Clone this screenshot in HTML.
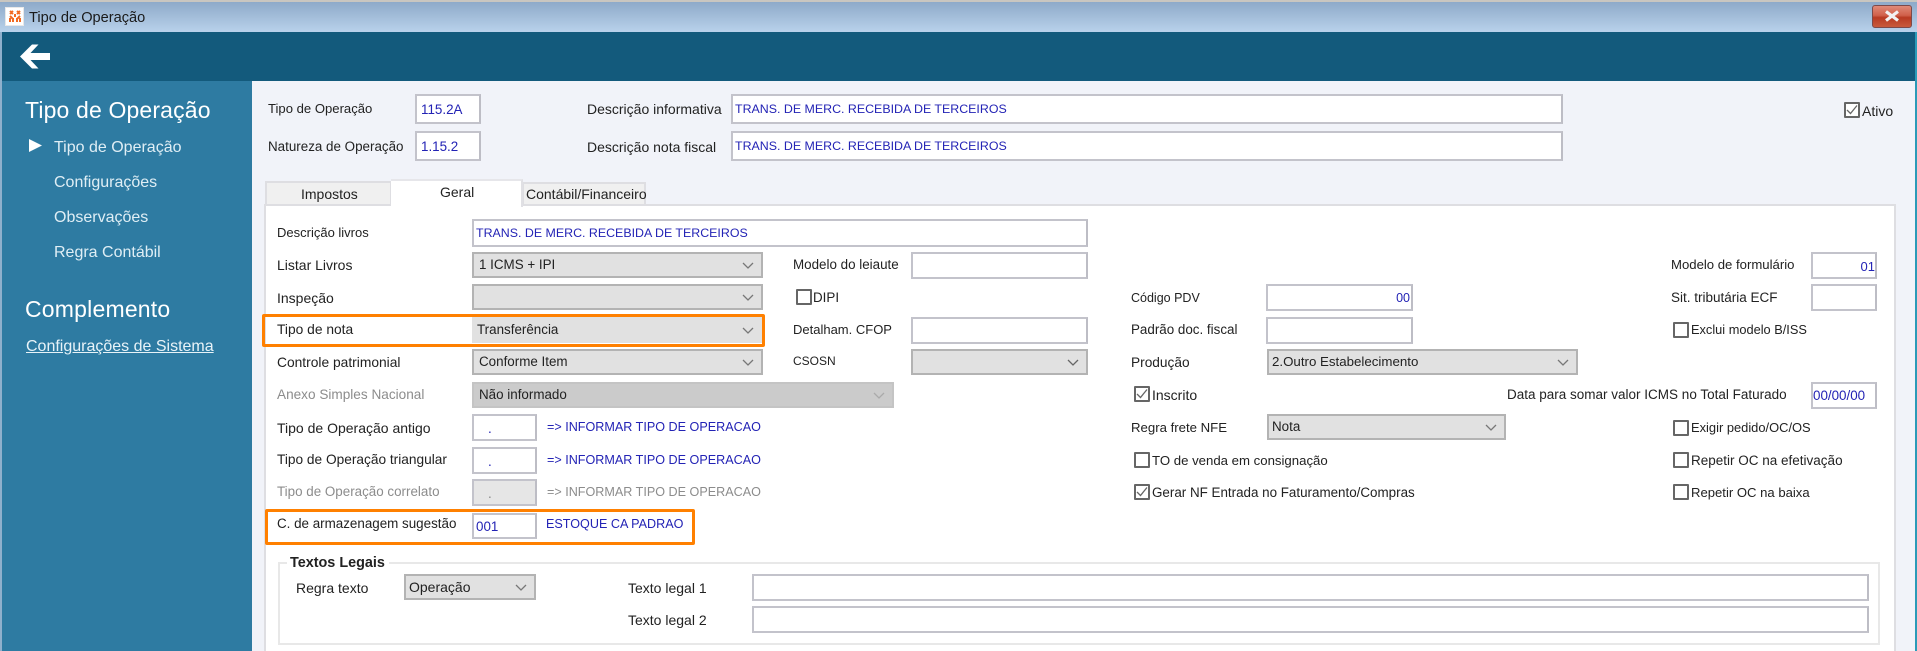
<!DOCTYPE html>
<html lang="pt"><head><meta charset="utf-8"><title>Tipo de Operação</title>
<style>
html,body{margin:0;padding:0;width:1917px;height:651px;overflow:hidden;background:#f1f3f9}
body{position:relative;font-family:"Liberation Sans",sans-serif;font-size:13.4px;color:#222;filter:blur(.3px)}
div,span{position:absolute;box-sizing:border-box}
.t{white-space:nowrap;height:20px;line-height:20px}
.b{color:#2323b5;font-size:12.6px}
.g{color:#8c8c8c}
.w{color:#dfeef5;font-size:16px}
.h{color:#fff;font-size:23px;height:30px;line-height:30px;white-space:nowrap}
.i{background:#fff;border:2px solid #c3c3cb;border-right-color:#bdbdc5;line-height:24px;padding-left:2px;white-space:nowrap;color:#2323b5}
.u{font-size:12.4px}
.s{background:#e1e1e1;border:2px solid #b3b3b3;line-height:22px;padding-left:5px;white-space:nowrap;color:#222}
.s svg{position:absolute;right:7px;top:8px}
.c{width:16px;height:16px;border:2px solid #666;background:#fff;border-radius:1px}
.c svg{position:absolute;left:0;top:0}
.o{border:3.5px solid #ff8000;border-radius:2px}
.k{font-size:14px}
</style></head><body>
<div style="left:0;top:0;width:1917px;height:2px;background:#c9c6c0"></div>
<div style="left:0;top:2px;width:1917px;height:30px;background:linear-gradient(#8eaac9,#b9d2eb)"></div>
<div style="left:5px;top:7px;width:19px;height:19px;background:#fff;border:1px solid #e8e8e8"></div>
<svg style="position:absolute;left:9px;top:10px" width="12" height="13" viewBox="0 0 12 13"><path d="M1 1l3 3M8 1l3 3M11 1L8 4M4 1L1 4M6 4l0 3M1 6l3 3M11 6L8 9M1 12V8M4 12V8M8 12V8M11 12V8" stroke="#f26a21" stroke-width="2" fill="none"/></svg>
<span class="t" style="left:29px;top:8px;font-size:14.6px;color:#1a1a1a">Tipo de Operação</span>
<div style="left:1872px;top:5px;width:40px;height:23px;border:1px solid #7c4a4a;border-radius:3px;background:linear-gradient(#e08a78 0%,#d0604a 45%,#b83a22 55%,#c85a3c 100%)"></div>
<svg style="position:absolute;left:1884px;top:10px" width="16" height="12" viewBox="0 0 16 12"><path d="M2 1.500L14 10.500M14 1.500L2 10.500" stroke="#f2f2f2" stroke-width="3.200"/></svg>

<div style="left:0;top:32px;width:1915px;height:49px;background:#135a7c"></div>
<svg style="position:absolute;left:19px;top:43px" width="32" height="27" viewBox="0 0 32 27"><path d="M1 13.500L13 1.500h6.500L11.500 10H31v7H11.500l8 8.500H13Z" fill="#fff"/></svg>

<div style="left:0;top:32px;width:2px;height:619px;background:#8fb0cc"></div>
<div style="left:2px;top:81px;width:250px;height:570px;background:#2e7ba2"></div>
<span class="h" style="left:25px;top:95px;letter-spacing:.15px">Tipo de Operação</span>
<svg style="position:absolute;left:29px;top:139px" width="14" height="13" viewBox="0 0 14 13"><path d="M0 0L13 6.500 0 13Z" fill="#fff"/></svg>
<span class="t w" style="left:54px;top:138px">Tipo de Operação</span>
<span class="t w" style="left:54px;top:173px">Configurações</span>
<span class="t w" style="left:54px;top:208px">Observações</span>
<span class="t w" style="left:54px;top:243px">Regra Contábil</span>
<span class="h" style="left:25px;top:294px;letter-spacing:.2px">Complemento</span>
<span class="t w" style="left:26px;top:337px;text-decoration:underline;color:#e8f3f8">Configurações de Sistema</span>

<div style="left:1915px;top:32px;width:2px;height:619px;background:#2a9bb8"></div>

<span class="t" style="left:268px;top:99px;font-size:13.100px">Tipo de Operação</span>
<div class="i" style="left:415px;top:94px;width:66px;height:30px;line-height:27px;padding-left:4px;font-size:13.400px">115.2A</div>
<span class="t" style="left:268px;top:137px">Natureza de Operação</span>
<div class="i" style="left:415px;top:131px;width:66px;height:30px;line-height:27px;padding-left:4px;font-size:13.400px">1.15.2</div>
<span class="t k" style="left:587px;top:99px">Descrição informativa</span>
<div class="i u" style="left:731px;top:94px;width:832px;height:30px;line-height:27px">TRANS. DE MERC. RECEBIDA DE TERCEIROS</div>
<span class="t k" style="left:587px;top:137px">Descrição nota fiscal</span>
<div class="i u" style="left:731px;top:131px;width:832px;height:30px;line-height:27px">TRANS. DE MERC. RECEBIDA DE TERCEIROS</div>
<div class="c" style="left:1844px;top:102px"><svg width="12" height="12" viewBox="0 0 12 12"><path d="M1 6l3.500 3.500L11 1.500" stroke="#666" stroke-width="1.300" fill="none"/></svg></div>
<span class="t k" style="left:1862px;top:101px">Ativo</span>

<div style="left:265px;top:181px;width:127px;height:24px;background:#f0f0f0;border:2px solid #dedee2;border-bottom:0"></div>
<span class="t k" style="left:301px;top:184px">Impostos</span>
<div style="left:522px;top:182px;width:124px;height:23px;background:#f0f0f0;border:2px solid #dedee2;border-bottom:0"></div>
<div style="left:264px;top:204px;width:1632px;height:447px;background:#fff;border:2px solid #dedee2;border-bottom:0"></div>
<div style="left:391px;top:179px;width:132px;height:28px;background:#fff;border-top:2px solid #e6e6ea;border-right:2px solid #e0e0e4"></div>
<span class="t k" style="left:440px;top:182px">Geral</span>
<span class="t k" style="left:526px;top:184px">Contábil/Financeiro</span>

<span class="t" style="left:277px;top:223px;font-size:13px">Descrição livros</span>
<div class="i u" style="left:472px;top:219px;width:616px;height:28px;line-height:25px">TRANS. DE MERC. RECEBIDA DE TERCEIROS</div>
<span class="t k" style="left:277px;top:255px">Listar Livros</span>
<div class="s" style="left:472px;top:252px;width:291px;height:26px">1 ICMS + IPI<svg width="12" height="7" viewBox="0 0 12 7"><path d="M1 1l5 5 5-5" stroke="#777" stroke-width="1.300" fill="none"/></svg></div>
<span class="t k" style="left:277px;top:288px">Inspeção</span>
<div class="s" style="left:472px;top:284px;width:291px;height:26px"><svg width="12" height="7" viewBox="0 0 12 7"><path d="M1 1l5 5 5-5" stroke="#777" stroke-width="1.300" fill="none"/></svg></div>
<span class="t" style="left:277px;top:320px;font-size:13.800px">Tipo de nota</span>
<div class="s" style="left:472px;top:317px;width:291px;height:26px;padding-left:3px;border-color:#e1e1e1">Transferência<svg width="12" height="7" viewBox="0 0 12 7"><path d="M1 1l5 5 5-5" stroke="#777" stroke-width="1.300" fill="none"/></svg></div>
<div class="o" style="left:262px;top:313.500px;width:503px;height:33px"></div>
<span class="t" style="left:277px;top:353px;font-size:13.800px">Controle patrimonial</span>
<div class="s" style="left:472px;top:349px;width:291px;height:26px">Conforme Item<svg width="12" height="7" viewBox="0 0 12 7"><path d="M1 1l5 5 5-5" stroke="#777" stroke-width="1.300" fill="none"/></svg></div>
<span class="t g" style="left:277px;top:385px;font-size:13.600px">Anexo Simples Nacional</span>
<div class="s g" style="left:472px;top:382px;width:422px;height:26px;background:#cbcbcb;border-color:#c4c4c4">Não informado<svg width="12" height="7" viewBox="0 0 12 7"><path d="M1 1l5 5 5-5" stroke="#aaa" stroke-width="1.300" fill="none"/></svg></div>

<span class="t k" style="left:277px;top:418px">Tipo de Operação antigo</span>
<div class="i" style="left:472px;top:414px;width:65px;height:27px;padding-left:14px;line-height:25px">.</div>
<span class="t b" style="left:547px;top:417px">=&gt; INFORMAR TIPO DE OPERACAO</span>
<span class="t" style="left:277px;top:450px;font-size:13.700px">Tipo de Operação triangular</span>
<div class="i" style="left:472px;top:447px;width:65px;height:27px;padding-left:14px;line-height:25px">.</div>
<span class="t b" style="left:547px;top:450px">=&gt; INFORMAR TIPO DE OPERACAO</span>
<span class="t g" style="left:277px;top:482px">Tipo de Operação correlato</span>
<div class="i g" style="left:472px;top:479px;width:65px;height:27px;padding-left:14px;background:#e6e6e6;color:#888;line-height:25px">.</div>
<span class="t g" style="left:547px;top:482px;font-size:12.600px">=&gt; INFORMAR TIPO DE OPERACAO</span>
<span class="t" style="left:277px;top:514px">C. de armazenagem sugestão</span>
<div class="i" style="left:472px;top:513px;width:65px;height:26px;font-size:13.400px">001</div>
<span class="t b" style="left:546px;top:514px">ESTOQUE CA PADRAO</span>
<div class="o" style="left:265px;top:509px;width:430px;height:35.500px"></div>

<div style="left:278px;top:562px;width:1602px;height:83px;border:2px solid #e8e8e8"></div>
<span class="t" style="left:287px;top:553px;padding:0 4px 0 3px;background:#fff;font-weight:bold;color:#222;font-size:14.400px">Textos Legais</span>
<span class="t k" style="left:296px;top:578px">Regra texto</span>
<div class="s k" style="left:404px;top:574px;width:132px;height:26px;padding-left:3px">Operação<svg width="12" height="7" viewBox="0 0 12 7"><path d="M1 1l5 5 5-5" stroke="#777" stroke-width="1.300" fill="none"/></svg></div>
<span class="t k" style="left:628px;top:578px">Texto legal 1</span>
<div class="i" style="left:752px;top:574px;width:1117px;height:27px"></div>
<span class="t k" style="left:628px;top:610px">Texto legal 2</span>
<div class="i" style="left:752px;top:606px;width:1117px;height:27px"></div>

<span class="t" style="left:793px;top:255px">Modelo do leiaute</span>
<div class="i" style="left:911px;top:252px;width:177px;height:27px"></div>
<div class="c" style="left:796px;top:289px"></div>
<span class="t" style="left:813px;top:288px">DIPI</span>
<span class="t" style="left:793px;top:320px;font-size:13px">Detalham. CFOP</span>
<div class="i" style="left:911px;top:317px;width:177px;height:27px"></div>
<span class="t" style="left:793px;top:351px;font-size:12px">CSOSN</span>
<div class="s" style="left:911px;top:349px;width:177px;height:26px"><svg width="12" height="7" viewBox="0 0 12 7"><path d="M1 1l5 5 5-5" stroke="#666" stroke-width="1.300" fill="none"/></svg></div>

<span class="t" style="left:1131px;top:288px;font-size:12.500px">Código PDV</span>
<div class="i" style="left:1266px;top:284px;width:147px;height:27px;text-align:right;padding-right:1px;font-size:12.500px;line-height:25px">00</div>
<span class="t" style="left:1131px;top:320px">Padrão doc. fiscal</span>
<div class="i" style="left:1266px;top:317px;width:147px;height:27px"></div>
<span class="t" style="left:1131px;top:353px;font-size:13.700px">Produção</span>
<div class="s" style="left:1267px;top:349px;width:311px;height:26px;padding-left:3px;font-size:13.300px">2.Outro Estabelecimento<svg width="12" height="7" viewBox="0 0 12 7"><path d="M1 1l5 5 5-5" stroke="#777" stroke-width="1.300" fill="none"/></svg></div>
<div class="c" style="left:1134px;top:386px"><svg width="12" height="12" viewBox="0 0 12 12"><path d="M1 6l3.500 3.500L11 1.500" stroke="#666" stroke-width="1.300" fill="none"/></svg></div>
<span class="t k" style="left:1152px;top:385px">Inscrito</span>
<span class="t" style="left:1131px;top:418px;font-size:13.200px">Regra frete NFE</span>
<div class="s" style="left:1267px;top:414px;width:239px;height:26px;padding-left:3px">Nota<svg width="12" height="7" viewBox="0 0 12 7"><path d="M1 1l5 5 5-5" stroke="#777" stroke-width="1.300" fill="none"/></svg></div>
<div class="c" style="left:1134px;top:452px"></div>
<span class="t" style="left:1152px;top:451px;font-size:13.200px">TO de venda em consignação</span>
<div class="c" style="left:1134px;top:484px"><svg width="12" height="12" viewBox="0 0 12 12"><path d="M1 6l3.500 3.500L11 1.500" stroke="#666" stroke-width="1.300" fill="none"/></svg></div>
<span class="t" style="left:1152px;top:483px">Gerar NF Entrada no Faturamento/Compras</span>

<span class="t" style="left:1671px;top:255px;font-size:13.150px">Modelo de formulário</span>
<div class="i" style="left:1811px;top:252px;width:66px;height:27px;text-align:right;padding-right:0;font-size:13px;line-height:25px">01</div>
<span class="t" style="left:1671px;top:288px;font-size:13.500px">Sit. tributária ECF</span>
<div class="i" style="left:1811px;top:284px;width:66px;height:27px"></div>
<div class="c" style="left:1673px;top:322px"></div>
<span class="t" style="left:1691px;top:320px;font-size:12.800px">Exclui modelo B/ISS</span>
<span class="t" style="left:1507px;top:385px;font-size:13.500px">Data para somar valor ICMS no Total Faturado</span>
<div class="i" style="left:1811px;top:382px;width:66px;height:27px;padding-left:0;font-size:13.400px">00/00/00</div>
<div class="c" style="left:1673px;top:420px"></div>
<span class="t" style="left:1691px;top:418px;font-size:12.900px">Exigir pedido/OC/OS</span>
<div class="c" style="left:1673px;top:452px"></div>
<span class="t" style="left:1691px;top:451px;font-size:13.500px">Repetir OC na efetivação</span>
<div class="c" style="left:1673px;top:484px"></div>
<span class="t" style="left:1691px;top:483px;font-size:13.100px">Repetir OC na baixa</span>
</body></html>
